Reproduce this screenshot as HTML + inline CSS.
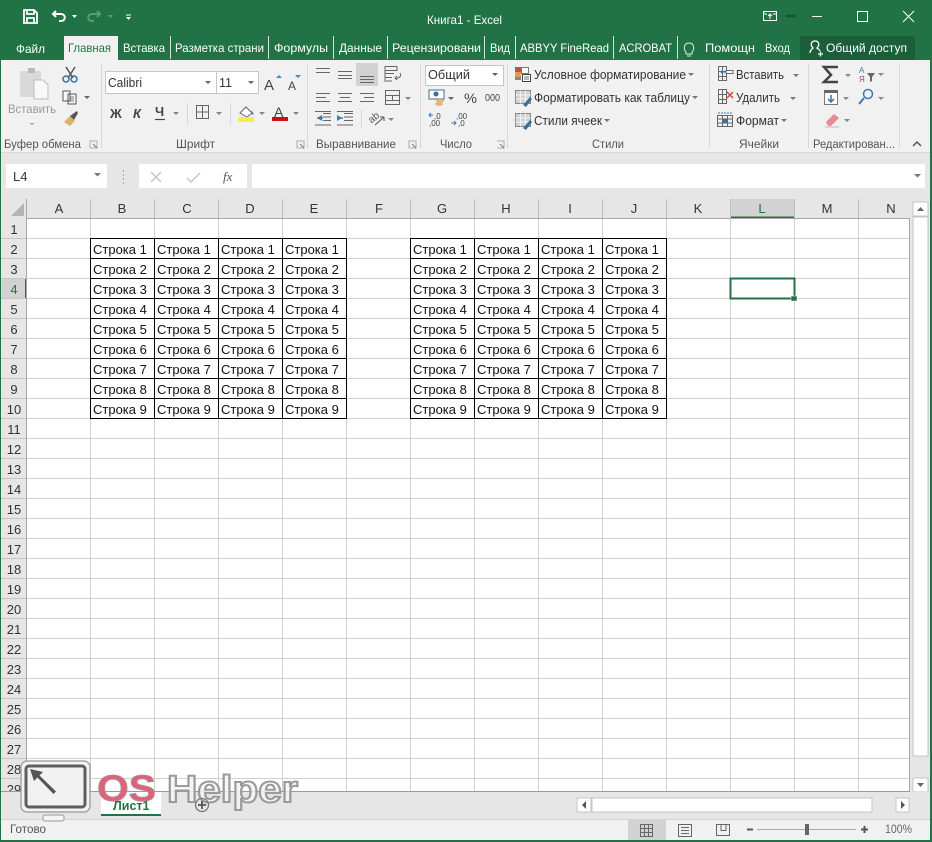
<!DOCTYPE html>
<html><head><meta charset="utf-8"><style>
html,body{margin:0;padding:0;background:#fff;width:932px;height:842px;overflow:hidden}
svg{display:block}
text{font-family:"Liberation Sans",sans-serif}
.c text{font-size:13px;fill:#111}
.h text{font-size:13px;fill:#333;text-anchor:middle}
.t text{font-size:12px;fill:#fff}
.g text{font-size:11.5px;fill:#555}
</style></head><body>
<svg width="932" height="842" viewBox="0 0 932 842" xmlns="http://www.w3.org/2000/svg">
<rect width="932" height="842" fill="#fff"/>
<!-- title bar -->
<rect width="932" height="60" fill="#217346"/>
<g fill="none" stroke="#fff" stroke-width="1.800">
<path d="M24 10h10l3 3v10H24z"/><path d="M27 10v4h7v-4M27 23v-5h7v5"/>
<path d="M56 11l-3 3 3 3M53 14h8c5 0 5 7 0 7h-2" stroke-width="2"/>
<path d="M97 11l3 3-3 3M100 14h-8c-5 0-5 7 0 7h2" stroke="#5d9a78" stroke-width="2"/>
<path d="M126 15h5" stroke-width="1"/>
<rect x="763.500" y="11.500" width="13" height="9" stroke-width="1"/><path d="M770 19v-5M768 16l2-2 2 2M764 14h3M773 14h3" stroke-width="1"/>
<path d="M812 16.500h10M857.500 11.500h10v10h-10zM903 11l11 11M914 11l-11 11" stroke-width="1"/>
</g>
<path d="M72 15h5l-2.500 3z" fill="#fff"/><path d="M108 15h5l-2.500 3z" fill="#5d9a78"/>
<path d="M126 17h5l-2.500 3z" fill="#fff"/>
<path d="M785 16l3-2v4zM796 16l-3-2v4z" fill="#174f31"/><rect x="788" y="15" width="5" height="2" fill="#174f31"/>
<g class="t">
<text x="427" y="24" textLength="75" lengthAdjust="spacingAndGlyphs">Книга1 - Excel</text>
<text x="16" y="53" textLength="29" lengthAdjust="spacingAndGlyphs">Файл</text>
<text x="123" y="52" textLength="42" lengthAdjust="spacingAndGlyphs">Вставка</text>
<text x="175" y="52" textLength="89" lengthAdjust="spacingAndGlyphs">Разметка страни</text>
<text x="274" y="52" textLength="54" lengthAdjust="spacingAndGlyphs">Формулы</text>
<text x="339" y="52" textLength="43" lengthAdjust="spacingAndGlyphs">Данные</text>
<text x="392" y="52" textLength="89" lengthAdjust="spacingAndGlyphs">Рецензировани</text>
<text x="490" y="52" textLength="20" lengthAdjust="spacingAndGlyphs">Вид</text>
<text x="520" y="52" textLength="89" lengthAdjust="spacingAndGlyphs">ABBYY FineRead</text>
<text x="619" y="52" textLength="53" lengthAdjust="spacingAndGlyphs">ACROBAT</text>
<text x="705" y="52" textLength="50" lengthAdjust="spacingAndGlyphs">Помощн</text>
<text x="765" y="52" textLength="25" lengthAdjust="spacingAndGlyphs">Вход</text>
</g>
<path d="M170.500 36v23M268.500 36v23M333.500 36v23M387.500 36v23M484.500 36v23M515.500 36v23M613.500 36v23M677.500 36v23" stroke="#cfe3d8" stroke-width="1"/>
<path d="M686 52c-3-3-2-9 3-9s6 6 3 9v2h-6zM687 56h4" fill="none" stroke="#dfeee6"/>
<rect x="800" y="36" width="115" height="24" fill="#1a5f3a"/>
<path d="M810 53c0-3 2-4 3-5-3-3-2-7 2-7s5 4 2 7c1 .5 2 1 3 3M818 54h5M820.500 51.500v5" fill="none" stroke="#fff" stroke-width="1.300"/>
<text x="826" y="52" font-size="12" fill="#fff" textLength="81" lengthAdjust="spacingAndGlyphs">Общий доступ</text>
<!-- ribbon -->
<rect x="1" y="60" width="929" height="92" fill="#f1f1f1"/>
<rect x="64" y="36" width="54" height="24" fill="#f1f1f1"/>
<text x="68" y="52" font-size="12" fill="#217346" textLength="43" lengthAdjust="spacingAndGlyphs">Главная</text>
<rect x="1" y="152" width="929" height="1" fill="#d8d8d8"/>
<rect x="1" y="153" width="929" height="46" fill="#e6e6e6"/>
<path d="M101.500 64v84M307.500 64v84M420.500 64v84M507.500 64v84M709.500 64v84M808.500 64v84M899.500 64v84" stroke="#d8d8d8"/>
<g class="g">
<text x="4" y="148" textLength="77" lengthAdjust="spacingAndGlyphs">Буфер обмена</text>
<text x="176" y="148" textLength="39" lengthAdjust="spacingAndGlyphs">Шрифт</text>
<text x="316" y="148" textLength="80" lengthAdjust="spacingAndGlyphs">Выравнивание</text>
<text x="440" y="148" textLength="32" lengthAdjust="spacingAndGlyphs">Число</text>
<text x="592" y="148" textLength="32" lengthAdjust="spacingAndGlyphs">Стили</text>
<text x="739" y="148" textLength="40" lengthAdjust="spacingAndGlyphs">Ячейки</text>
<text x="813" y="148" textLength="82" lengthAdjust="spacingAndGlyphs">Редактирован...</text>
</g>
<path d="M90 141h7v7h-7zM297 141h7v7h-7zM409 141h7v7h-7zM497 141h7v7h-7" fill="none" stroke="#999" stroke-width=".8"/>
<path d="M93 144l4 4M300 144l4 4M412 144l4 4M500 144l4 4" stroke="#777"/>
<path d="M913 146l4-4 4 4" fill="none" stroke="#555" stroke-width="1.500"/>
<!-- clipboard -->
<rect x="20" y="71" width="21" height="26" fill="#d9d9d9"/><rect x="28" y="68" width="7" height="5" fill="#bbb"/>
<path d="M34 80h9l5 5v14H34z" fill="#f8f8f8" stroke="#bdbdbd"/>
<text x="8" y="113" font-size="12" fill="#999" textLength="48" lengthAdjust="spacingAndGlyphs">Вставить</text>
<path d="M29 123h6l-3 2z" fill="#aaa"/>
<path d="M66 67l7 11M75 67l-7 11" stroke="#555" stroke-width="1.500"/><circle cx="66" cy="79" r="3" fill="none" stroke="#2f72a8" stroke-width="1.500"/><circle cx="74" cy="79" r="3" fill="none" stroke="#2f72a8" stroke-width="1.500"/>
<path d="M63 91h7v10h-7zM68 94h8v10h-8z" fill="#f8f8f8" stroke="#555"/><path d="M70 97h4M70 99h4M70 101h4" stroke="#555" stroke-width=".7"/>
<path d="M84 96h6l-3 3z" fill="#666"/>
<path d="M64 122l6-6 5 5-5 5z" fill="#d9b36c"/><path d="M70 116l7-5 1 2-4 7z" fill="#555"/>
<!-- font -->
<rect x="105.500" y="71.500" width="153" height="22" fill="#fff" stroke="#c6c6c6"/><path d="M216.500 72v21" stroke="#c6c6c6"/>
<text x="108" y="87" font-size="12.500" fill="#333" textLength="34" lengthAdjust="spacingAndGlyphs">Calibri</text>
<text x="219" y="87" font-size="12.500" fill="#333">11</text>
<path d="M205 81h6l-3 3zM248 81h6l-3 3z" fill="#666"/>
<text x="264" y="90" font-size="15" fill="#444">A</text><text x="288" y="90" font-size="12" fill="#444">A</text>
<path d="M276 78l3-3 3 3zM295 75l3 3 3-3z" fill="#4d84b5"/>
<text x="110" y="118" font-size="13" font-weight="bold" fill="#444">Ж</text>
<text x="133" y="118" font-size="13" font-weight="bold" font-style="italic" fill="#444">К</text>
<text x="155" y="116" font-size="13" font-weight="bold" fill="#444">Ч</text>
<path d="M155 119.500h10" stroke="#444" stroke-width="1.200"/>
<path d="M173 112h6l-3 3zM216 112h6l-3 3zM259 112h6l-3 3zM293 112h6l-3 3z" fill="#888"/>
<path d="M187.500 103v21M230.500 103v21" stroke="#d5d5d5"/>
<path d="M196.500 105.500h12v13h-12zM202.500 105.500v13M196.500 112h12" fill="none" stroke="#666"/>
<path d="M240 113l6-6 6 6-5 4z" fill="#fff" stroke="#666"/><path d="M251 110l3 4-2 1z" fill="#4d84b5"/>
<rect x="238" y="117" width="16" height="5" fill="#f5ee4a"/>
<text x="274" y="117" font-size="14" fill="#444">A</text><rect x="272" y="117" width="16" height="4" fill="#c8101a"/>
<!-- alignment -->
<rect x="356" y="63" width="22" height="23" fill="#d2d2d2"/>
<path d="M316 68.500h14M316 72.500h14M338 71.500h14M338 75.500h14M338 78.500h14M360 76.500h14M360 79.500h14M360 82.500h14M316 93.500h14M316 97.500h10M316 101.500h14M338 93.500h14M340 97.500h10M338 101.500h14M360 93.500h14M364 97.500h10M360 101.500h14" stroke="#666"/>
<path d="M385 66.500h12v4h-12zM385 73.500h9M385 77.500h7M385 66v15h7M400 73c2 3-1 6-5 5M397 76l-2 2 2 2" fill="none" stroke="#666"/>
<path d="M385.500 90.500h14v14h-14zM385.500 95.500h14M385.500 100.500h14M392.500 95.500v5" fill="none" stroke="#666"/>
<path d="M405 97h6l-3 3zM388 118h6l-3 3z" fill="#888"/>
<path d="M323 113.500h8M323 117h8M323 120.500h8M315 125h16M315 111.500h16M344 113.500h9M344 120.500h9M337 111.500h16M337 125h16M344 117h9" stroke="#666"/>
<path d="M322 115l-5 3 5 3zM337 115l5 3-5 3z" fill="#3c7cb4"/><path d="M317 118h6M337 118h6" stroke="#3c7cb4" stroke-width="1.500"/>
<path d="M361.500 110v18" stroke="#d5d5d5"/>
<text x="368" y="122" font-size="10" fill="#555" transform="rotate(-40 372 118)">ab</text>
<path d="M375 125l9-8M384 117v4M384 117h-4" fill="none" stroke="#555"/>
<!-- number -->
<rect x="425.500" y="65.500" width="78" height="20" fill="#fff" stroke="#c6c6c6"/>
<text x="428" y="79" font-size="12.500" fill="#333" textLength="42" lengthAdjust="spacingAndGlyphs">Общий</text>
<path d="M492 73h6l-3 3zM448 97h6l-3 3z" fill="#666"/>
<rect x="429" y="90" width="15" height="9" fill="#fff" stroke="#3d6f92"/><circle cx="436" cy="94" r="2.500" fill="#3d6f92"/>
<ellipse cx="440" cy="101" rx="4" ry="2" fill="#e0b878"/><ellipse cx="439" cy="104" rx="4" ry="2" fill="#e0b878"/>
<text x="464" y="103" font-size="14" fill="#444" textLength="13" lengthAdjust="spacingAndGlyphs">%</text>
<text x="485" y="101" font-size="10" fill="#444" textLength="15" lengthAdjust="spacingAndGlyphs">000</text>
<text x="434" y="119" font-size="8" fill="#444">,0</text><text x="429" y="126" font-size="8" fill="#444">,00</text>
<text x="456" y="119" font-size="8" fill="#444">,00</text><text x="458" y="126" font-size="8" fill="#444">,0</text>
<path d="M433 115h-4M431 113l-2 2 2 2M451 123h5M454 121l2 2-2 2" fill="none" stroke="#3c7cb4"/>
<!-- styles -->
<g font-size="12.500" fill="#333">
<text x="534" y="79" textLength="152" lengthAdjust="spacingAndGlyphs">Условное форматирование</text>
<text x="534" y="102" textLength="156" lengthAdjust="spacingAndGlyphs">Форматировать как таблицу</text>
<text x="534" y="125" textLength="68" lengthAdjust="spacingAndGlyphs">Стили ячеек</text>
<text x="736" y="79" textLength="48" lengthAdjust="spacingAndGlyphs">Вставить</text>
<text x="736" y="102" textLength="44" lengthAdjust="spacingAndGlyphs">Удалить</text>
<text x="736" y="125" textLength="43" lengthAdjust="spacingAndGlyphs">Формат</text>
</g>
<path d="M688 73h6l-3 3zM692 96h6l-3 3zM604 119h6l-3 3zM793 74h6l-3 3zM790 97h6l-3 3zM781 119h6l-3 3z" fill="#777"/>
<rect x="515" y="67" width="6" height="5" fill="#c0504d"/><rect x="515" y="72" width="6" height="5" fill="#e89a4a"/><rect x="515" y="77" width="6" height="3" fill="#6b8eb0"/>
<rect x="521.500" y="67.500" width="7" height="6" fill="#fff" stroke="#777"/><rect x="522.500" y="74.500" width="8" height="7" fill="#fff" stroke="#444"/><path d="M524 77h5M524 79h5" stroke="#444" stroke-width=".8"/>
<path d="M515.500 90.500h15v13h-15z" fill="#cfd3d8" stroke="#888"/><path d="M520.500 90.500v13M525.500 90.500v13M515.500 95h15M515.500 99h15" stroke="#fff" stroke-width=".7"/><path d="M523 105l7-8 2 2-6 8z" fill="#3c6f96"/>
<path d="M515.500 113.500h15v13h-15z" fill="#cfd3d8" stroke="#888"/><path d="M520.500 113.500v13M525.500 113.500v13M515.500 118h15M515.500 122h15" stroke="#fff" stroke-width=".7"/><path d="M523 128l7-8 2 2-6 8z" fill="#3c6f96"/>
<!-- cells -->
<path d="M718.500 66.500h8v5h-8zM718.500 71.500h8v5h-8zM718.500 76.500h8v4h-8zM722.500 66.500v14" fill="none" stroke="#666"/>
<path d="M726 70.500h7v3h-7z" fill="#fff" stroke="#666"/><path d="M726 72h-5M723 70l-2 2 2 2" fill="none" stroke="#2f72a8"/>
<path d="M718.500 89.500h8v5h-8zM718.500 94.500h8v5h-8zM718.500 99.500h8v4h-8zM722.500 89.500v14" fill="none" stroke="#666"/>
<path d="M727 92l6 6M733 92l-6 6" stroke="#d9453b" stroke-width="1.500"/>
<path d="M717.500 115.500h15v11h-15zM717.500 119h15M717.500 123h15M722.500 115.500v11M727.500 115.500v11" fill="none" stroke="#666"/>
<rect x="722" y="119" width="6" height="4" fill="#3c6f96"/><path d="M718 113h14" stroke="#3c7cb4" stroke-dasharray="2 1"/>
<!-- editing -->
<path d="M838 67h-14l7 8-7 7h14" fill="none" stroke="#444" stroke-width="2.500"/>
<path d="M845 74h6l-3 3zM878 73h6l-3 3zM843 97h6l-3 3zM878 97h6l-3 3zM844 119h6l-3 3z" fill="#888"/>
<text x="859" y="73" font-size="8" fill="#3c7cb4">А</text><text x="859" y="82" font-size="8" fill="#a040a0">Я</text>
<path d="M867 73h8l-3 4v4l-2 1v-5z" fill="#666"/>
<rect x="824.500" y="90.500" width="13" height="14" fill="#fff" stroke="#777"/><rect x="824" y="90" width="14" height="3" fill="#666"/>
<path d="M831 95v7M828 99l3 3 3-3" fill="none" stroke="#2f72a8" stroke-width="1.500"/>
<circle cx="868" cy="94" r="4.500" fill="none" stroke="#3c7cb4" stroke-width="1.500"/><path d="M864 98l-5 6" stroke="#3c7cb4" stroke-width="2"/>
<path d="M826 122l8-8 5 4-8 8h-3z" fill="#e88a94"/><path d="M825 127h14" stroke="#bbb"/>
<!-- formula bar -->
<rect x="6" y="164" width="101" height="24" fill="#fff"/>
<text x="13" y="181" font-size="13" fill="#333">L4</text>
<path d="M94 173h7l-3.500 3.500z" fill="#777"/>
<path d="M123.500 170v15" stroke="#aaa" stroke-dasharray="2 2"/>
<rect x="139" y="164" width="108" height="24" fill="#fff"/>
<path d="M151 172l10 10M161 172l-10 10M187 178l4 4 9-9" fill="none" stroke="#c6c6c6" stroke-width="1.500"/>
<text x="223" y="181" font-size="13" font-style="italic" fill="#555" style="font-family:'Liberation Serif',serif">fx</text>
<rect x="252" y="164" width="673" height="24" fill="#fff"/>
<path d="M914 174h7l-3.500 3.500z" fill="#777"/>
<!-- sheet area -->
<rect x="1" y="199" width="26" height="593" fill="#e6e6e6"/>
<rect x="27" y="199" width="883" height="19" fill="#e6e6e6"/>
<path d="M24 203v13H11z" fill="#b4b4b4"/>
<rect x="27" y="218" width="883" height="574" fill="#fff"/>
<rect x="730" y="199" width="65" height="19" fill="#d2d2d2"/><path d="M730 217.500h65" stroke="#217346" stroke-width="2"/>
<path d="M1 278h26v21H1z" fill="#d2d2d2"/><path d="M26 278v21" stroke="#217346" stroke-width="2"/>
<path d="M90.500 199v19M154.500 199v19M218.500 199v19M282.500 199v19M346.500 199v19M410.500 199v19M474.500 199v19M538.500 199v19M602.500 199v19M666.500 199v19M730.500 199v19M794.500 199v19M858.500 199v19" stroke="#bdbdbd"/>
<path d="M90.500 218v574M154.500 218v574M218.500 218v574M282.500 218v574M346.500 218v574M410.500 218v574M474.500 218v574M538.500 218v574M602.500 218v574M666.500 218v574M730.500 218v574M794.500 218v574M858.500 218v574" stroke="#d0d0d0"/>
<path d="M27 238.500h883M27 258.500h883M27 278.500h883M27 298.500h883M27 318.500h883M27 338.500h883M27 358.500h883M27 378.500h883M27 398.500h883M27 418.500h883M27 438.500h883M27 458.500h883M27 478.500h883M27 498.500h883M27 518.500h883M27 538.500h883M27 558.500h883M27 578.500h883M27 598.500h883M27 618.500h883M27 638.500h883M27 658.500h883M27 678.500h883M27 698.500h883M27 718.500h883M27 738.500h883M27 758.500h883M27 778.500h883" stroke="#d0d0d0"/>
<path d="M1 238.500h26M1 258.500h26M1 278.500h26M1 298.500h26M1 318.500h26M1 338.500h26M1 358.500h26M1 378.500h26M1 398.500h26M1 418.500h26M1 438.500h26M1 458.500h26M1 478.500h26M1 498.500h26M1 518.500h26M1 538.500h26M1 558.500h26M1 578.500h26M1 598.500h26M1 618.500h26M1 638.500h26M1 658.500h26M1 678.500h26M1 698.500h26M1 718.500h26M1 738.500h26M1 758.500h26M1 778.500h26" stroke="#c6c6c6"/>
<path d="M26.500 199v593M27 218.500h883M909.500 218v574" stroke="#a8a8a8"/>
<g class="h">
<text x="59" y="213">A</text><text x="122" y="213">B</text><text x="187" y="213">C</text><text x="250" y="213">D</text><text x="314" y="213">E</text><text x="379" y="213">F</text><text x="442" y="213">G</text><text x="506" y="213">H</text><text x="570" y="213">I</text><text x="634" y="213">J</text><text x="698" y="213">K</text><text x="762" y="213" style="fill:#217346">L</text><text x="827" y="213">M</text><text x="891" y="213">N</text>
<text x="14" y="234">1</text><text x="14" y="254">2</text><text x="14" y="274">3</text><text x="14" y="294" style="fill:#217346">4</text><text x="14" y="314">5</text><text x="14" y="334">6</text><text x="14" y="354">7</text><text x="14" y="374">8</text><text x="14" y="394">9</text><text x="14" y="414">10</text><text x="14" y="434">11</text><text x="14" y="454">12</text><text x="14" y="474">13</text><text x="14" y="494">14</text><text x="14" y="514">15</text><text x="14" y="534">16</text><text x="14" y="554">17</text><text x="14" y="574">18</text><text x="14" y="594">19</text><text x="14" y="614">20</text><text x="14" y="634">21</text><text x="14" y="654">22</text><text x="14" y="674">23</text><text x="14" y="694">24</text><text x="14" y="714">25</text><text x="14" y="734">26</text><text x="14" y="754">27</text><text x="14" y="774">28</text><text x="14" y="794">29</text>
</g>
<!-- cell borders -->
<path d="M90.500 238v181M154.500 238v181M218.500 238v181M282.500 238v181M346.500 238v181M90 238.500h257M90 258.500h257M90 278.500h257M90 298.500h257M90 318.500h257M90 338.500h257M90 358.500h257M90 378.500h257M90 398.500h257M90 418.500h257M410.500 238v181M474.500 238v181M538.500 238v181M602.500 238v181M666.500 238v181M410 238.500h257M410 258.500h257M410 278.500h257M410 298.500h257M410 318.500h257M410 338.500h257M410 358.500h257M410 378.500h257M410 398.500h257M410 418.500h257" stroke="#000"/>
<g class="c">
<text x="93" y="254">Строка 1</text><text x="157" y="254">Строка 1</text><text x="221" y="254">Строка 1</text><text x="285" y="254">Строка 1</text><text x="413" y="254">Строка 1</text><text x="477" y="254">Строка 1</text><text x="541" y="254">Строка 1</text><text x="605" y="254">Строка 1</text>
<text x="93" y="274">Строка 2</text><text x="157" y="274">Строка 2</text><text x="221" y="274">Строка 2</text><text x="285" y="274">Строка 2</text><text x="413" y="274">Строка 2</text><text x="477" y="274">Строка 2</text><text x="541" y="274">Строка 2</text><text x="605" y="274">Строка 2</text>
<text x="93" y="294">Строка 3</text><text x="157" y="294">Строка 3</text><text x="221" y="294">Строка 3</text><text x="285" y="294">Строка 3</text><text x="413" y="294">Строка 3</text><text x="477" y="294">Строка 3</text><text x="541" y="294">Строка 3</text><text x="605" y="294">Строка 3</text>
<text x="93" y="314">Строка 4</text><text x="157" y="314">Строка 4</text><text x="221" y="314">Строка 4</text><text x="285" y="314">Строка 4</text><text x="413" y="314">Строка 4</text><text x="477" y="314">Строка 4</text><text x="541" y="314">Строка 4</text><text x="605" y="314">Строка 4</text>
<text x="93" y="334">Строка 5</text><text x="157" y="334">Строка 5</text><text x="221" y="334">Строка 5</text><text x="285" y="334">Строка 5</text><text x="413" y="334">Строка 5</text><text x="477" y="334">Строка 5</text><text x="541" y="334">Строка 5</text><text x="605" y="334">Строка 5</text>
<text x="93" y="354">Строка 6</text><text x="157" y="354">Строка 6</text><text x="221" y="354">Строка 6</text><text x="285" y="354">Строка 6</text><text x="413" y="354">Строка 6</text><text x="477" y="354">Строка 6</text><text x="541" y="354">Строка 6</text><text x="605" y="354">Строка 6</text>
<text x="93" y="374">Строка 7</text><text x="157" y="374">Строка 7</text><text x="221" y="374">Строка 7</text><text x="285" y="374">Строка 7</text><text x="413" y="374">Строка 7</text><text x="477" y="374">Строка 7</text><text x="541" y="374">Строка 7</text><text x="605" y="374">Строка 7</text>
<text x="93" y="394">Строка 8</text><text x="157" y="394">Строка 8</text><text x="221" y="394">Строка 8</text><text x="285" y="394">Строка 8</text><text x="413" y="394">Строка 8</text><text x="477" y="394">Строка 8</text><text x="541" y="394">Строка 8</text><text x="605" y="394">Строка 8</text>
<text x="93" y="414">Строка 9</text><text x="157" y="414">Строка 9</text><text x="221" y="414">Строка 9</text><text x="285" y="414">Строка 9</text><text x="413" y="414">Строка 9</text><text x="477" y="414">Строка 9</text><text x="541" y="414">Строка 9</text><text x="605" y="414">Строка 9</text>
</g>
<!-- selection -->
<rect x="730.500" y="278.500" width="64" height="20" fill="none" stroke="#217346" stroke-width="2"/>
<rect x="791" y="296" width="6" height="5" fill="#217346" stroke="#fff" stroke-width=".5"/>
<!-- vertical scrollbar -->
<rect x="910" y="199" width="20" height="593" fill="#e6e6e6"/>
<rect x="913" y="202" width="15" height="14" fill="#fff" stroke="#c6c6c6"/><path d="M917 211h7l-3.500-4z" fill="#666"/>
<rect x="913" y="217" width="15" height="539" fill="#fff" stroke="#c6c6c6"/>
<rect x="913" y="778" width="15" height="14" fill="#fff" stroke="#c6c6c6"/><path d="M917 783h7l-3.500 4z" fill="#666"/>
<!-- sheet tabs -->
<rect x="1" y="792" width="929" height="28" fill="#e6e6e6"/>
<path d="M1 791.500h909" stroke="#9a9a9a"/>
<rect x="101" y="792" width="60" height="23" fill="#fff"/><rect x="101" y="814" width="60" height="2" fill="#217346"/>
<rect x="577" y="798" width="14" height="14" fill="#fff" stroke="#c6c6c6"/><path d="M586 801v8l-4-4z" fill="#555"/>
<rect x="592" y="798" width="280" height="14" fill="#fff" stroke="#c6c6c6"/>
<rect x="896" y="798" width="13" height="14" fill="#fff" stroke="#c6c6c6"/><path d="M901 801v8l4-4z" fill="#555"/>
<!-- status -->
<rect x="1" y="820" width="929" height="20" fill="#f1f1f1"/><path d="M1 819.500h929" stroke="#d4d4d4"/>
<text x="10" y="833" font-size="12" fill="#555" textLength="36" lengthAdjust="spacingAndGlyphs">Готово</text>
<rect x="628" y="820" width="38" height="20" fill="#d2d2d2"/>
<path d="M640.500 824.500h12v12h-12zM644.500 824.500v12M648.500 824.500v12M640.500 828.500h12M640.500 832.500h12M678.500 824.500h13v12h-13zM681 827.500h8M681 830.500h8M681 833.500h8M716.500 824.500h13v11h-13zM721 824.500v6h5v-6" fill="none" stroke="#666"/>
<path d="M747 829.500h6M861 829.500h7M864.500 826v7" stroke="#555" stroke-width="2"/>
<path d="M757 829.500h99" stroke="#aaa"/><rect x="805" y="824" width="4" height="11" fill="#666"/>
<text x="885" y="833" font-size="12" fill="#666" textLength="27" lengthAdjust="spacingAndGlyphs">100%</text>
<!-- window edges -->
<rect x="0" y="60" width="1" height="782" fill="#217346"/><rect x="930" y="60" width="2" height="782" fill="#217346"/><rect x="0" y="840" width="932" height="2" fill="#217346"/>
<!-- watermark -->
<rect x="21" y="761" width="69" height="51" rx="6" fill="#f4f4f4" fill-opacity=".9" stroke="#a5a5a5" stroke-width="1.500"/>
<rect x="26" y="766" width="59" height="41" rx="3" fill="#f2f2f2" stroke="#5e5e5e" stroke-width="3"/>
<rect x="43" y="815" width="21" height="6" rx="2" fill="#f4f4f4" stroke="#999"/>
<path d="M30 769l13 3-3.500 3.500 16.500 16-2.500 2.500-16-16.500-3.500 3.500z" fill="#555"/>
<text x="97" y="801" font-size="37" font-weight="bold" fill="#e4607a" stroke="#999" stroke-width=".8" textLength="59" lengthAdjust="spacingAndGlyphs">OS</text>
<text x="167" y="802" font-size="38" font-weight="bold" fill="#f4f4f4" fill-opacity=".85" stroke="#9a9a9a" stroke-width="2" textLength="131" lengthAdjust="spacingAndGlyphs">Helper</text>
<text x="113" y="810" font-size="12.500" font-weight="bold" fill="#217346">Лист1</text>
<circle cx="202" cy="805" r="6.500" fill="none" stroke="#777" stroke-width="1.300"/><path d="M198 805h8M202 801v8" stroke="#555" stroke-width="1.800"/>
</svg>
</body></html>
